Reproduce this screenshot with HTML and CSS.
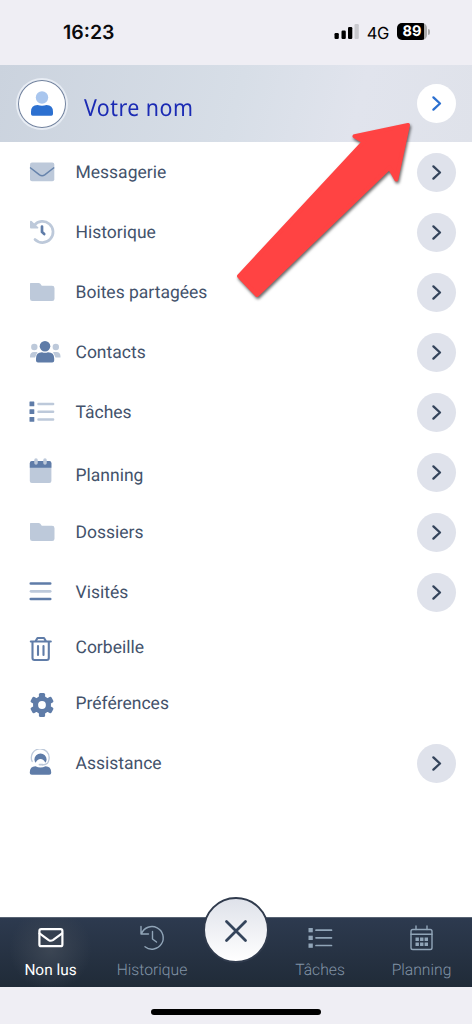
FILE: index.html
```html
<!DOCTYPE html>
<html lang="fr">
<head>
<meta charset="utf-8">
<title>Menu</title>
<link rel="stylesheet" href="styles.css">
</head>
<body>
<svg class="defs" width="0" height="0">
  <symbol id="chev" viewBox="0 0 39 39"><path d="M16.400 13.400l6.600 6.100-6.600 6.100" fill="none" stroke="currentColor" stroke-width="2.300" stroke-linecap="round" stroke-linejoin="round"/></symbol>
  <symbol id="folder" viewBox="0 0 36 28"><path fill="#bdc9da" d="M2.500 5h8q1 0 1.600.6l1.700 2.200h10.200q2.500 0 2.500 2.400v10.500q0 2.300-2.300 2.300H4.300Q2 23 2 20.700V6q0-1 .5-1z"/></symbol>
</svg>
<div class="phone">
  <header class="status">
    <span class="time">16:23</span>
    <div class="signals">
      <svg width="26" height="18" viewBox="0 0 26 18"><rect x="1.500" y="11" width="4.300" height="6" rx="1.200"/><rect x="8.500" y="8.500" width="4.300" height="8.500" rx="1.200"/><rect x="15" y="5" width="4.300" height="12" rx="1.200"/><rect x="21.500" y="2" width="4.300" height="15" rx="1.200" fill="#c9c9ce"/></svg>
      <span class="net">4G</span>
      <span class="battery">89</span><i class="tip"></i>
    </div>
  </header>
  <div class="profile">
    <div class="avatar"><svg width="48" height="48" viewBox="0 0 48 48"><circle cx="24" cy="17.500" r="6.200" fill="#a9c6ee"/><path fill="#2c70d0" d="M13 34v-2.200q0-6.800 6.500-6.800 4.500 1.400 9 0 6.500 0 6.500 6.800V34q0 1.800-1.700 1.800H14.700Q13 35.800 13 34z"/></svg></div>
    <span class="name">Votre nom</span>
    <button class="go white"><svg><use href="#chev"/></svg></button>
  </div>
  <nav class="menu">
    <div class="row"><svg class="ic" viewBox="0 0 36 28"><rect x="2" y="4.500" width="24.300" height="18.800" rx="2" fill="#bdc9da"/><path d="M2 9.500l9.500 7.400q2.600 1.800 5.200 0l9.500-7.400" fill="none" stroke="#6683ac" stroke-width="1.500"/></svg><span>Messagerie</span><button class="go"><svg><use href="#chev"/></svg></button></div>
    <div class="row"><svg class="ic" viewBox="0 0 36 28"><path d="M6.200 7.300A10.600 10.600 0 1 1 7 21.500" fill="none" stroke="#bdc9da" stroke-width="2.700" stroke-linecap="round"/><path fill="#bdc9da" d="M2 3.500q.5-1.500 1.600-.4l6.600 6.200q.8 1-.5 1.200L3 10.600q-1 0-1-1z"/><path d="M14 8.500v5.500l2.200 2" fill="none" stroke="#5f7ca8" stroke-width="2.700" stroke-linecap="round"/></svg><span>Historique</span><button class="go"><svg><use href="#chev"/></svg></button></div>
    <div class="row"><svg class="ic"><use href="#folder"/></svg><span>Boites partagées</span><button class="go"><svg><use href="#chev"/></svg></button></div>
    <div class="row"><svg class="ic" viewBox="0 0 36 28"><g fill="#bdc9da"><circle cx="6.300" cy="9" r="3.200"/><circle cx="27.800" cy="9" r="3.200"/><path d="M2 19.500v-1q0-4.500 4-4.500h3.500L7 19.500zM32.500 19.500v-1q0-4.500-4-4.500h-3.500l2.500 5.500z"/></g><circle cx="17" cy="8.300" r="5.300" fill="#5f7ca8"/><path fill="#5f7ca8" d="M8 22.500v-2q0-6.300 6-6.300 3 1.200 6 0 6.200 0 6.200 6.300v2q0 1.900-2 1.900H10q-2 0-2-1.900z"/></svg><span>Contacts</span><button class="go"><svg><use href="#chev"/></svg></button></div>
    <div class="row"><svg class="ic" viewBox="0 0 36 28"><g fill="#5f7ca8"><rect x="1.500" y="3.500" width="4.800" height="4.800" rx=".5"/><rect x="1.500" y="11.200" width="4.800" height="4.800" rx=".5"/><rect x="1.500" y="19" width="4.800" height="4.800" rx=".5"/></g><path d="M10.500 6h14.600M10.500 13.700h14.600M10.500 21.400h14.600" stroke="#bdc9da" stroke-width="2.500" stroke-linecap="round"/></svg><span>Tâches</span><button class="go"><svg><use href="#chev"/></svg></button></div>
    <div class="row"><svg class="ic" viewBox="0 0 36 28"><rect x="1.800" y="3.500" width="21.600" height="21.500" rx="2" fill="#bdc9da"/><path fill="#5f7ca8" d="M1.800 9.700V5q0-1.900 2-1.900h17.600q2 0 2 1.900v4.700z"/><path d="M8 2.100v3M17 2.100v3" stroke="#bdc9da" stroke-width="3.500" stroke-linecap="round"/></svg><span class="low">Planning</span><button class="go"><svg><use href="#chev"/></svg></button></div>
    <div class="row"><svg class="ic"><use href="#folder"/></svg><span>Dossiers</span><button class="go"><svg><use href="#chev"/></svg></button></div>
    <div class="row"><svg class="ic" viewBox="0 0 36 28"><path d="M2.800 5.500H22.200M2.800 21H22.200" stroke="#5f7ca8" stroke-width="2.700" stroke-linecap="round"/><path d="M3 13.300H22.200" stroke="#bdc9da" stroke-width="2.700" stroke-linecap="round"/></svg><span>Visités</span><button class="go"><svg><use href="#chev"/></svg></button></div>
    <div class="row short"><svg class="ic" viewBox="0 0 36 28"><g fill="none" stroke="#5f7ca8" stroke-width="2.100" stroke-linecap="round" stroke-linejoin="round"><path d="M2.800 5.500h20M4.500 6v16q0 2 2 2h12.300q2 0 2-2V6M7.500 5.300l2-3.300h6.500l2 3.300"/><path d="M10 10v9M15.500 10v9"/></g></svg><span>Corbeille</span></div>
    <div class="row short second"><svg class="ic" viewBox="0 0 36 28"><g fill="#5f7ca8" transform="translate(14 14)"><g id="tooth"><rect x="-3.100" y="-12" width="6.200" height="24" rx="1.500"/></g><use href="#tooth" transform="rotate(60)"/><use href="#tooth" transform="rotate(120)"/><circle r="9"/><circle r="3.900" fill="#fff"/></g></svg><span>Préférences</span></div>
    <div class="row"><svg class="ic" viewBox="0 0 36 28"><path d="M4.200 12.500a8.900 8.900 0 1 1 16.800-2.200q-.6 5.700-6.500 5.500" fill="none" stroke="#bdc9da" stroke-width="1.300" stroke-linecap="round"/><path fill="#5f7ca8" d="M6.400 10.500a6.100 6.100 0 0 1 12.200 0q0 2-1.300 3.200-1.700-3.700-4.800-3.700-3.100 0-4.800 3.700-1.300-1.200-1.300-3.200z"/><path d="M11.500 15.600h3" fill="none" stroke="#bdc9da" stroke-width="1.800" stroke-linecap="round"/><path fill="#5f7ca8" d="M1.800 24v-.7q0-6 5.700-6 5 2.400 10 0 5.700 0 5.700 6v.7q0 1.800-2 1.800H3.800q-2 0-2-1.800z"/></svg><span>Assistance</span><button class="go"><svg><use href="#chev"/></svg></button></div>
  </nav>
  <footer class="tabs">
    <div class="tab active"><svg viewBox="0 0 30 30"><rect x="3.400" y="6.200" width="23" height="17" rx="1.800" stroke-width="2.200"/><path d="M3.500 10.300l9.200 6.800q2 1.300 4.200 0l9.200-6.800" stroke-width="2.200"/></svg><span>Non lus</span></div>
    <div class="tab"><svg viewBox="0 0 30 30"><path d="M4 3.500v7.500h7.500M4.500 10.500A11.300 11.300 0 1 1 8 23.800M15.500 8.500v7.500l4 3"/></svg><span>Historique</span></div>
    <button class="close"><svg width="62" height="62" viewBox="0 0 62 62"><path d="M21.500 22.500l19 19M40.500 22.500l-19 19" stroke="#34445b" stroke-width="2.800" stroke-linecap="round"/></svg></button>
    <div class="tab"><svg viewBox="0 0 30 30"><path d="M11 7.200h15.500M11 14.800h15.500M11 22.500h15.500" stroke-width="1.700"/><g fill="#91a5b8" stroke="none"><rect x="3.500" y="5" width="4.300" height="4.300"/><rect x="3.500" y="12.700" width="4.300" height="4.300"/><rect x="3.500" y="20.500" width="4.300" height="4.300"/></g></svg><span>Tâches</span></div>
    <div class="tab"><svg viewBox="0 0 30 30"><rect x="4" y="6.500" width="21" height="20" rx="1.800"/><path d="M4 11.300h21M9 3v3.500M20 3v3.500"/><path d="M8.500 16.300h12.500M8.500 21.300h12.500" stroke-width="3.400" stroke-dasharray="3.400 1.150" stroke-linecap="butt"/></svg><span>Planning</span></div>
  </footer>
  <div class="home"><i></i></div>
  <svg class="arrow" width="200" height="200" viewBox="0 0 200 200"><path fill="#ff4343" stroke="#ff4343" stroke-width="4" stroke-linejoin="round" d="M10 156L135 21.700 125.500 16.300 179 5 167.300 59.500 160.500 47.500 28 175z"/></svg>
</div>
</body>
</html>
```
FILE: styles.css
```css
* { box-sizing: border-box; }
body { margin: 0; background: #fff; font-family: Roboto, sans-serif; text-rendering: geometricPrecision; }
.defs { position: absolute; }
.phone { position: relative; width: 472px; height: 1024px; display: flex; flex-direction: column; overflow: hidden; background: #fff; }
button { border: 0; padding: 0; }
svg { display: block; flex: none; }
.status { height: 65px; background: #efeef4; display: flex; justify-content: space-between; padding: 0 42px 0 63px; flex: none; }
.time { font: 600 19.500px/65px Inter, sans-serif; color: #0a0a0c; }
.signals { display: flex; align-items: center; }
.signals > svg { margin-top: -3px; }
.net { font: 400 16.500px/24px Inter, sans-serif; letter-spacing: -.4px; margin: 0 8px 0 8px; }
.battery { width: 30px; height: 17px; border-radius: 5px; background: linear-gradient(90deg, #000 91%, #aaa 91%); color: #fff; font: 700 14.500px/18px Inter, sans-serif; text-align: center; margin-top: -2px; }
.tip { width: 2px; height: 6px; margin: -2px 0 0 1px; border-radius: 0 3px 3px 0; background: #aaa; }
.profile { height: 77px; flex: none; display: flex; align-items: center; padding: 0 16px 0 18px; background: linear-gradient(105deg, #cbd3de 0%, #d7dee7 50%, #e1e4ed 75%, #dfe2ea 100%); }
.avatar { width: 48px; height: 48px; border-radius: 50%; background: #fff; box-shadow: inset 0 0 0 1px #71829e, 0 0 0 2px #e8edf4; }
.name { font: 400 23.500px/30px "Noto Sans", sans-serif; letter-spacing: .5px; transform: scaleX(.91); transform-origin: left; color: #1b2bb4; margin: 7px auto 0 18px; }
.go { width: 39px; height: 39px; border-radius: 50%; background: #dfe2eb; color: #34445b; flex: none; }
.go svg { width: 39px; height: 39px; }
.go.white { background: #fff; color: #2c70d0; }
.menu { flex: 1; }
.row { height: 60px; display: flex; align-items: center; padding: 0 16px 0 28px; color: #43526b; font-size: 17.500px; line-height: 24px; }
.row .ic { width: 36px; height: 28px; }
.row span { margin: 0 auto 0 11.500px; padding-top: 2px; }
.row .low { padding-top: 8px; }
.short { height: 55px; }
.second { height: 56px; }
.short span { padding-bottom: 5px; }
.tabs { height: 70px; flex: none; display: grid; grid-template-columns: 101px 102px 66px 102px 101px; background: linear-gradient(#2d3a4f, #202b38); border-top: 1px solid #586373; }
.tab { display: flex; flex-direction: column; align-items: center; color: #8193a6; font-size: 15.700px; line-height: 20px; font-weight: 300; padding-top: 5px; }
.tab svg { width: 30px; height: 30px; fill: none; stroke: #91a5b8; stroke-width: 1.400; stroke-linecap: round; stroke-linejoin: round; }
.tab span { margin-top: 7px; }
.tab.active { color: #fff; font-weight: 400; font-size: 15.400px; background: radial-gradient(circle at 50% 45%, #3c4654, transparent 65%); }
.tab.active svg { stroke: #fff; }
.close { width: 66px; height: 66px; margin-top: -21px; border-radius: 50%; border: 2px solid #303b4d; background: linear-gradient(#dfe2ea, #fff); }
.home { height: 37px; flex: none; background: #efeef4; display: flex; justify-content: center; padding-top: 22px; }
.home i { width: 170px; height: 6px; border-radius: 3px; background: #000; }
.arrow { position: absolute; left: 229px; top: 120px; filter: drop-shadow(1px 2px 1.500px rgba(0,0,0,.6)); }
```
